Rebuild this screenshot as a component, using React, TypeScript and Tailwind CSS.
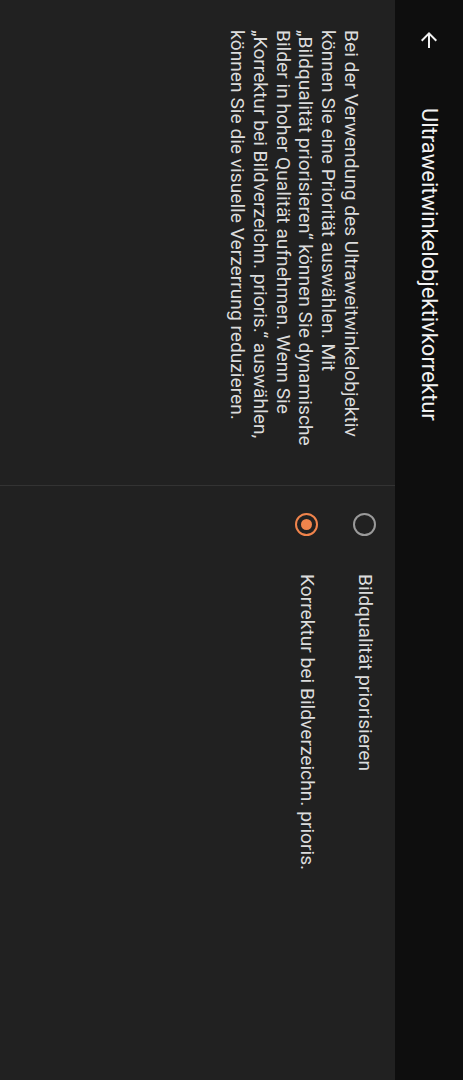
import React from "react";

function BackArrow() {
  return (
    <svg width="24" height="24" viewBox="0 0 24 24" fill="none">
      <path d="M20 11H7.83l5.59-5.59L12 4l-8 8 8 8 1.41-1.41L7.83 13H20v-2z" fill="#f2f2f2" />
    </svg>
  );
}

function Radio({ checked }: { checked?: boolean }) {
  return checked ? (
    <div className="w-[23px] h-[23px] rounded-full border-[2.5px] border-[#f0844c] flex items-center justify-center shrink-0">
      <div className="w-[11px] h-[11px] rounded-full bg-[#f0844c]" />
    </div>
  ) : (
    <div className="w-[23px] h-[23px] rounded-full border-[2.5px] border-[#9a9a9a] shrink-0" />
  );
}

export default function App() {
  const lines = [
    "Bei der Verwendung des Ultraweitwinkelobjektiv",
    "können Sie eine Priorität auswählen. Mit",
    "„Bildqualität priorisieren“ können Sie dynamische",
    "Bilder in hoher Qualität aufnehmen. Wenn Sie",
    "„Korrektur bei Bildverzeichn. prioris.“ auswählen,",
    "können Sie die visuelle Verzerrung reduzieren.",
  ];
  return (
    <div className="w-[463px] h-[1080px] overflow-hidden bg-[#212121]" style={{ fontFamily: "Roboto, 'Noto Sans', sans-serif" }}>
      <div className="w-[1080px] h-[463px] origin-top-left rotate-90 translate-x-[463px] flex flex-col bg-[#212121]">
        <div className="h-[68px] bg-[#0e0e0e] flex items-center shrink-0">
          <div className="ml-[28px] w-[24px] h-[24px] flex items-center justify-center">
            <BackArrow />
          </div>
          <div className="ml-[56px] text-[22px] text-[#f2f2f2] leading-none">Ultraweitwinkelobjektivkorrektur</div>
        </div>
        <div className="flex flex-1">
          <div className="w-[486px] shrink-0 border-r border-[#333333] pl-[30px] pt-[33px]">
            {lines.map((l, i) => (
              <div key={i} className="whitespace-nowrap text-[19.2px] leading-[22.8px] text-[#dcdcdc]">
                {l}
              </div>
            ))}
          </div>
          <div className="flex-1 pt-[1px]">
            <div className="h-[58px] flex items-center pl-[27px]">
              <Radio />
              <div className="ml-[38px] text-[19.2px] text-[#dcdcdc]">Bildqualität priorisieren</div>
            </div>
            <div className="h-[58px] flex items-center pl-[27px]">
              <Radio checked />
              <div className="ml-[38px] text-[19.2px] text-[#dcdcdc]">Korrektur bei Bildverzeichn. prioris.</div>
            </div>
          </div>
        </div>
      </div>
    </div>
  );
}
